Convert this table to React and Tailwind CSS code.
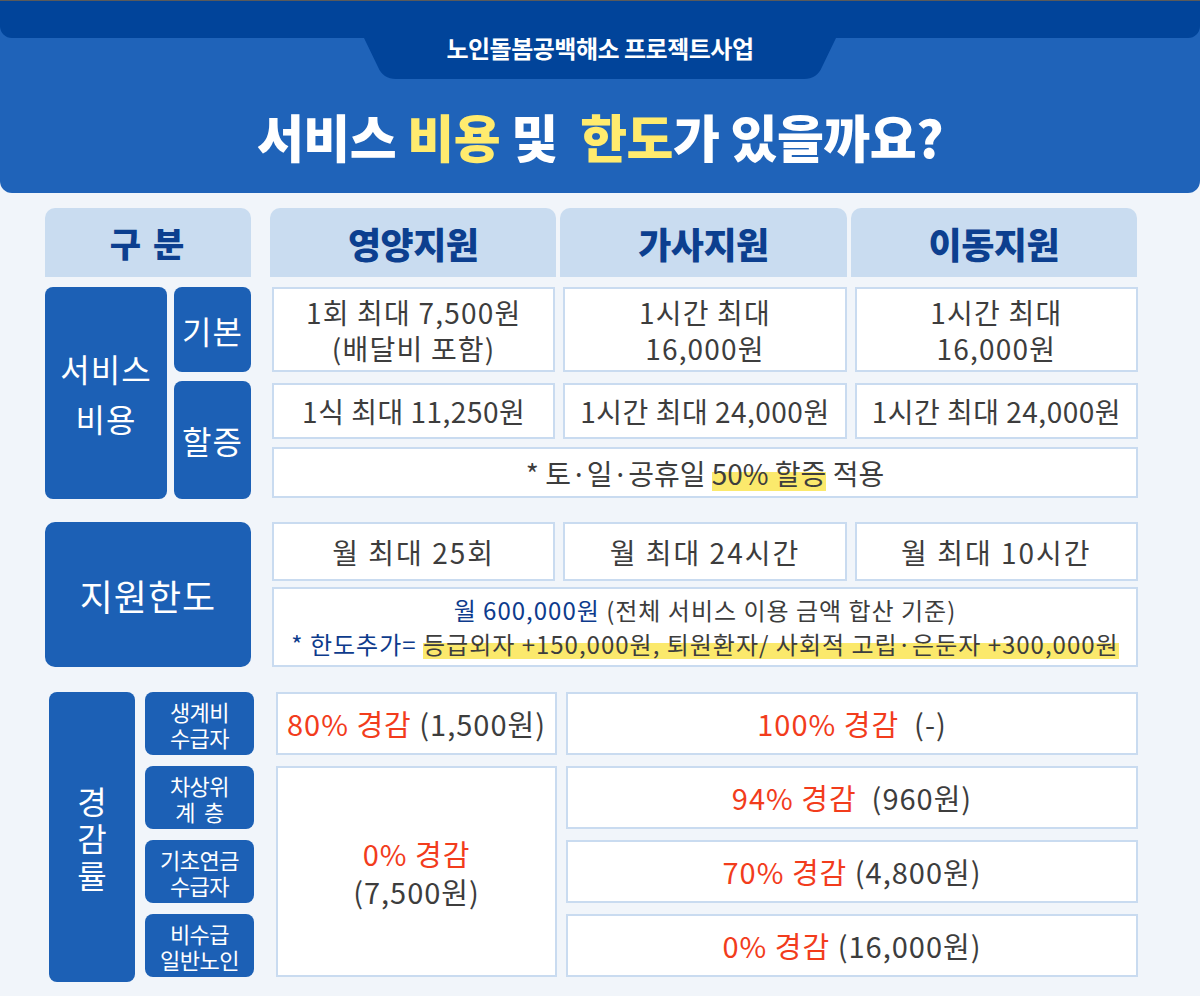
import React from "react";

const cell =
  "bg-white border-2 border-[#c9dbf0] flex flex-col items-center justify-center text-center text-[#3d3d3d]";
const label =
  "bg-[#1c60b5] rounded-[8px] flex items-center justify-center text-center text-white";
const mark =
  "bg-[linear-gradient(transparent_48%,#fbe96c_48%,#fbe96c_95%,transparent_95%)]";

function Header() {
  return (
    <div className="h-[192px] bg-[#1f63b9] rounded-b-[12px] flex flex-col items-center">
      <div className="self-stretch h-[37px] bg-[#01449a] rounded-b-[12px]" />
      <div className="relative w-[472px] h-[41px] flex items-start justify-center">
        <svg className="absolute inset-0" width="472" height="41" viewBox="0 0 472 41">
          <path d="M0 0 H472 L458 29 Q453 41 440 41 H32 Q19 41 14 29 Z" fill="#01449a" />
        </svg>
        <span className="relative -mt-[8px] text-white text-[24px] font-bold tracking-[-0.5px]">
          노인돌봄공백해소 프로젝트사업
        </span>
      </div>
      <div className="mt-[28px] text-white text-[51px] leading-[58px] font-black tracking-[-0.5px]">
        서비스 <span className="text-[#ffeb6e]">비용</span> 및&nbsp;&nbsp;
        <span className="text-[#ffeb6e]">한도</span>가 있을까요?
      </div>
    </div>
  );
}

function HeadRow() {
  const cols = ["영양지원", "가사지원", "이동지원"];
  return (
    <div className="flex gap-[19px] h-[69px]">
      <div className="w-[206px] rounded-t-[10px] bg-[#c9dcf0] flex items-center justify-center text-[34px] font-black text-[#0c3f8f] tracking-[2px]">
        구 분
      </div>
      <div className="w-[867px] grid grid-cols-3 gap-[4px]">
        {cols.map((c) => (
          <div
            key={c}
            className="rounded-t-[10px] bg-[#c9dcf0] flex items-center justify-center text-[36px] font-black text-[#0c3f8f] tracking-[-0.5px]"
          >
            {c}
          </div>
        ))}
      </div>
    </div>
  );
}

function CostRow() {
  return (
    <div className="mt-[10px] flex gap-[21px] h-[212px]">
      <div className="w-[206px] flex gap-[7px]">
        <div className={`${label} w-[122px] text-[32px] leading-[50px] tracking-[1px]`}>
          서비스
          <br />
          비용
        </div>
        <div className="w-[77px] flex flex-col gap-[9px]">
          <div className={`${label} h-[85px] text-[32px] tracking-[1px]`}>기본</div>
          <div className={`${label} flex-1 text-[32px] tracking-[1px]`}>할증</div>
        </div>
      </div>
      <div className="w-[866px] flex flex-col text-[28px] tracking-[1.2px]">
        <div className="h-[85px] grid grid-cols-3 gap-[8px] leading-[36px]">
          <div className={cell}>
            <span>1회 최대 7,500원</span>
            <span>(배달비 포함)</span>
          </div>
          <div className={cell}>
            <span>1시간 최대</span>
            <span>16,000원</span>
          </div>
          <div className={cell}>
            <span>1시간 최대</span>
            <span>16,000원</span>
          </div>
        </div>
        <div className="mt-[11px] h-[56px] grid grid-cols-3 gap-[8px] tracking-[0.5px]">
          <div className={cell}>1식 최대 11,250원</div>
          <div className={cell}>1시간 최대 24,000원</div>
          <div className={cell}>1시간 최대 24,000원</div>
        </div>
        <div className={`${cell} mt-[8px] h-[51px] tracking-[0px]`}>
          <span>
            * 토·일·공휴일 <span className={mark}>50% 할증</span> 적용
          </span>
        </div>
      </div>
    </div>
  );
}

function LimitRow() {
  return (
    <div className="mt-[23px] flex gap-[21px] h-[145px]">
      <div className={`${label} w-[206px] rounded-[10px] text-[36px] tracking-[1px]`}>
        지원한도
      </div>
      <div className="w-[866px] flex flex-col">
        <div className="h-[59px] grid grid-cols-3 gap-[8px] text-[28px] tracking-[2px]">
          <div className={cell}>월 최대 25회</div>
          <div className={cell}>월 최대 24시간</div>
          <div className={cell}>월 최대 10시간</div>
        </div>
        <div className={`${cell} mt-[6px] flex-1 text-[24px] leading-[34px] tracking-[1px]`}>
          <span>
            <span className="text-[#0d3b8c]">월 600,000원</span> (전체 서비스 이용 금액 합산 기준)
          </span>
          <span>
            <span className="text-[#0d3b8c]">* 한도추가=</span>{" "}
            <span className={mark}>
              등급외자 +150,000원, 퇴원환자/ 사회적 고립·은둔자 +300,000원
            </span>
          </span>
        </div>
      </div>
    </div>
  );
}

function Red({ children }) {
  return <span className="text-[#f23c1c]">{children}</span>;
}

function RateRow() {
  const subs = [
    ["생계비", "수급자"],
    ["차상위", "계\u00a0\u00a0층"],
    ["기초연금", "수급자"],
    ["비수급", "일반노인"],
  ];
  return (
    <div className="mt-[25px] flex h-[290px]">
      <div className={`${label} ml-[4px] w-[86px] text-[32px] leading-[37px]`}>
        경<br />감<br />률
      </div>
      <div className="ml-[10px] w-[109px] flex flex-col gap-[11px]">
        {subs.map(([a, b]) => (
          <div key={a} className={`${label} h-[63px] flex-col text-[22px] leading-[26px] rounded-[6px] tracking-[-0.5px]`}>
            <span>{a}</span>
            <span>{b}</span>
          </div>
        ))}
      </div>
      <div className="ml-[22px] w-[862px] grid grid-cols-[281px_1fr] grid-rows-[repeat(4,63px)] gap-x-[9px] gap-y-[11px] text-[29px] tracking-[1px]">
        <div className={cell}>
          <span>
            <Red>80% 경감</Red> (1,500원)
          </span>
        </div>
        <div className={cell}>
          <span>
            <Red>100% 경감</Red>&nbsp; (-)
          </span>
        </div>
        <div className={`${cell} row-span-3 leading-[38px]`}>
          <Red>0% 경감</Red>
          <span>(7,500원)</span>
        </div>
        <div className={cell}>
          <span>
            <Red>94% 경감</Red>&nbsp; (960원)
          </span>
        </div>
        <div className={cell}>
          <span>
            <Red>70% 경감</Red> (4,800원)
          </span>
        </div>
        <div className={cell}>
          <span>
            <Red>0% 경감</Red> (16,000원)
          </span>
        </div>
      </div>
    </div>
  );
}

export default function App() {
  return (
    <div className="w-[1200px] h-[996px] overflow-hidden bg-[#f1f5fa] border-t border-[#5a5a5a] font-['Noto_Sans_CJK_KR','Noto_Sans',sans-serif]">
      <Header />
      <div className="pl-[45px] pt-[15px] flex flex-col">
        <HeadRow />
        <CostRow />
        <LimitRow />
        <RateRow />
      </div>
    </div>
  );
}
